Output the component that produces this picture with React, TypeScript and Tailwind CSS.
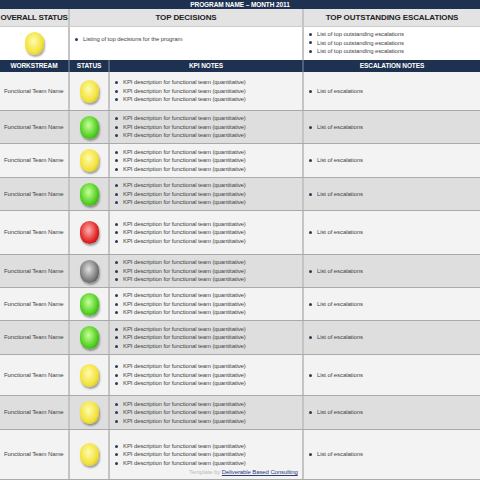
import React from 'react';

const COLORS: Record<string, [string, string, string]> = {
  yellow: ['#fffbb0', '#f2e23a', '#b09a10'],
  green: ['#c8ff9a', '#4fcf1f', '#2a7a0c'],
  red: ['#ffb0b0', '#e02424', '#8a0c0c'],
  gray: ['#e0e0e0', '#7a7a7a', '#333333'],
};

const ROWS: { s: string; h: number }[] = [
  { s: 'yellow', h: 39 },
  { s: 'green', h: 33 },
  { s: 'yellow', h: 34 },
  { s: 'green', h: 33 },
  { s: 'red', h: 44 },
  { s: 'gray', h: 33 },
  { s: 'green', h: 33 },
  { s: 'green', h: 34 },
  { s: 'yellow', h: 41 },
  { s: 'yellow', h: 34 },
  { s: 'yellow', h: 50 },
];

function Light({ c }: { c: string }) {
  const [a, b, d] = COLORS[c];
  return (
    <div
      className="w-[19px] h-[23px] rounded-full shadow-[1px_2px_2px_rgba(0,0,0,0.35)]"
      style={{ background: `radial-gradient(ellipse at 45% 40%, ${a} 0%, ${b} 60%, ${d} 100%)` }}
    />
  );
}

function Bullet({ children }: { children: React.ReactNode }) {
  return (
    <div className="flex items-center gap-[5px] leading-[8.5px] whitespace-nowrap">
      <span className="w-[3px] h-[3px] rounded-full bg-[#2b3a5a] shrink-0" />
      <span>{children}</span>
    </div>
  );
}

const kpi = 'KPI description for functional team (quantitative)';

export default function App() {
  return (
    <div
      className="relative w-[480px] h-[480px] overflow-hidden bg-[#f4f4f4] text-[#444] text-[6px] tracking-[-0.1px]"
      style={{ fontFamily: '"Liberation Sans Narrow", "Liberation Sans", Arial, sans-serif' }}
    >
      <div className="h-[9px] bg-[#1f3150] text-white font-bold text-[6.5px] flex items-center justify-center">
        PROGRAM NAME – MONTH 2011
      </div>
      <div className="flex h-[18px] bg-[#e3e3e3] text-[#222] font-bold text-[8px] whitespace-nowrap border-b border-[#ccc]">
        <div className="w-[70px] flex items-center justify-center border-r-2 border-[#c4c4c4] tracking-[-0.3px]">OVERALL STATUS</div>
        <div className="w-[234px] flex items-center justify-center border-r-2 border-[#c4c4c4]">TOP DECISIONS</div>
        <div className="flex-1 flex items-center justify-center">TOP OUTSTANDING ESCALATIONS</div>
      </div>
      <div className="flex h-[33px] bg-white">
        <div className="w-[70px] flex items-center justify-center border-r-2 border-[#c4c4c4]">
          <Light c="yellow" />
        </div>
        <div className="w-[234px] pl-[5px] pt-[8px] border-r-2 border-[#c4c4c4]">
          <Bullet>Listing of top decisions for the program</Bullet>
        </div>
        <div className="flex-1 pl-[5px] pt-[3px]">
          <Bullet>List of top outstanding escalations</Bullet>
          <Bullet>List of top outstanding escalations</Bullet>
          <Bullet>List of top outstanding escalations</Bullet>
        </div>
      </div>
      <div className="flex h-[12px] bg-[#1f3150] text-white font-bold text-[6.5px] whitespace-nowrap">
        <div className="w-[70px] flex items-center justify-center border-r-2 border-[#51607a]">WORKSTREAM</div>
        <div className="w-[40px] flex items-center justify-center border-r-2 border-[#51607a]">STATUS</div>
        <div className="w-[194px] flex items-center justify-center border-r-2 border-[#51607a]">KPI NOTES</div>
        <div className="flex-1 flex items-center justify-center">ESCALATION NOTES</div>
      </div>
      {ROWS.map((r, i) => (
        <div
          key={i}
          className={`flex border-b border-[#aaa] ${i % 2 ? 'bg-[#dedede]' : 'bg-[#f3f3f3]'}`}
          style={{ height: r.h }}
        >
          <div className="w-[70px] flex items-center pl-[4px] whitespace-nowrap border-r-2 border-[#c4c4c4]">Functional Team Name</div>
          <div className="w-[40px] flex items-center justify-center border-r-2 border-[#c4c4c4]">
            <Light c={r.s} />
          </div>
          <div className="w-[194px] flex flex-col justify-center pl-[5px] border-r-2 border-[#c4c4c4]">
            <Bullet>{kpi}</Bullet>
            <Bullet>{kpi}</Bullet>
            <Bullet>{kpi}</Bullet>
          </div>
          <div className="flex-1 flex items-center pl-[5px]">
            <Bullet>List of escalations</Bullet>
          </div>
        </div>
      ))}
      <div className="absolute left-[189px] top-[468px] text-[6px] text-[#bbb] whitespace-nowrap">
        Template by <span className="text-[#2b3a7a] underline">Deliverable Based Consulting</span>
      </div>
    </div>
  );
}
